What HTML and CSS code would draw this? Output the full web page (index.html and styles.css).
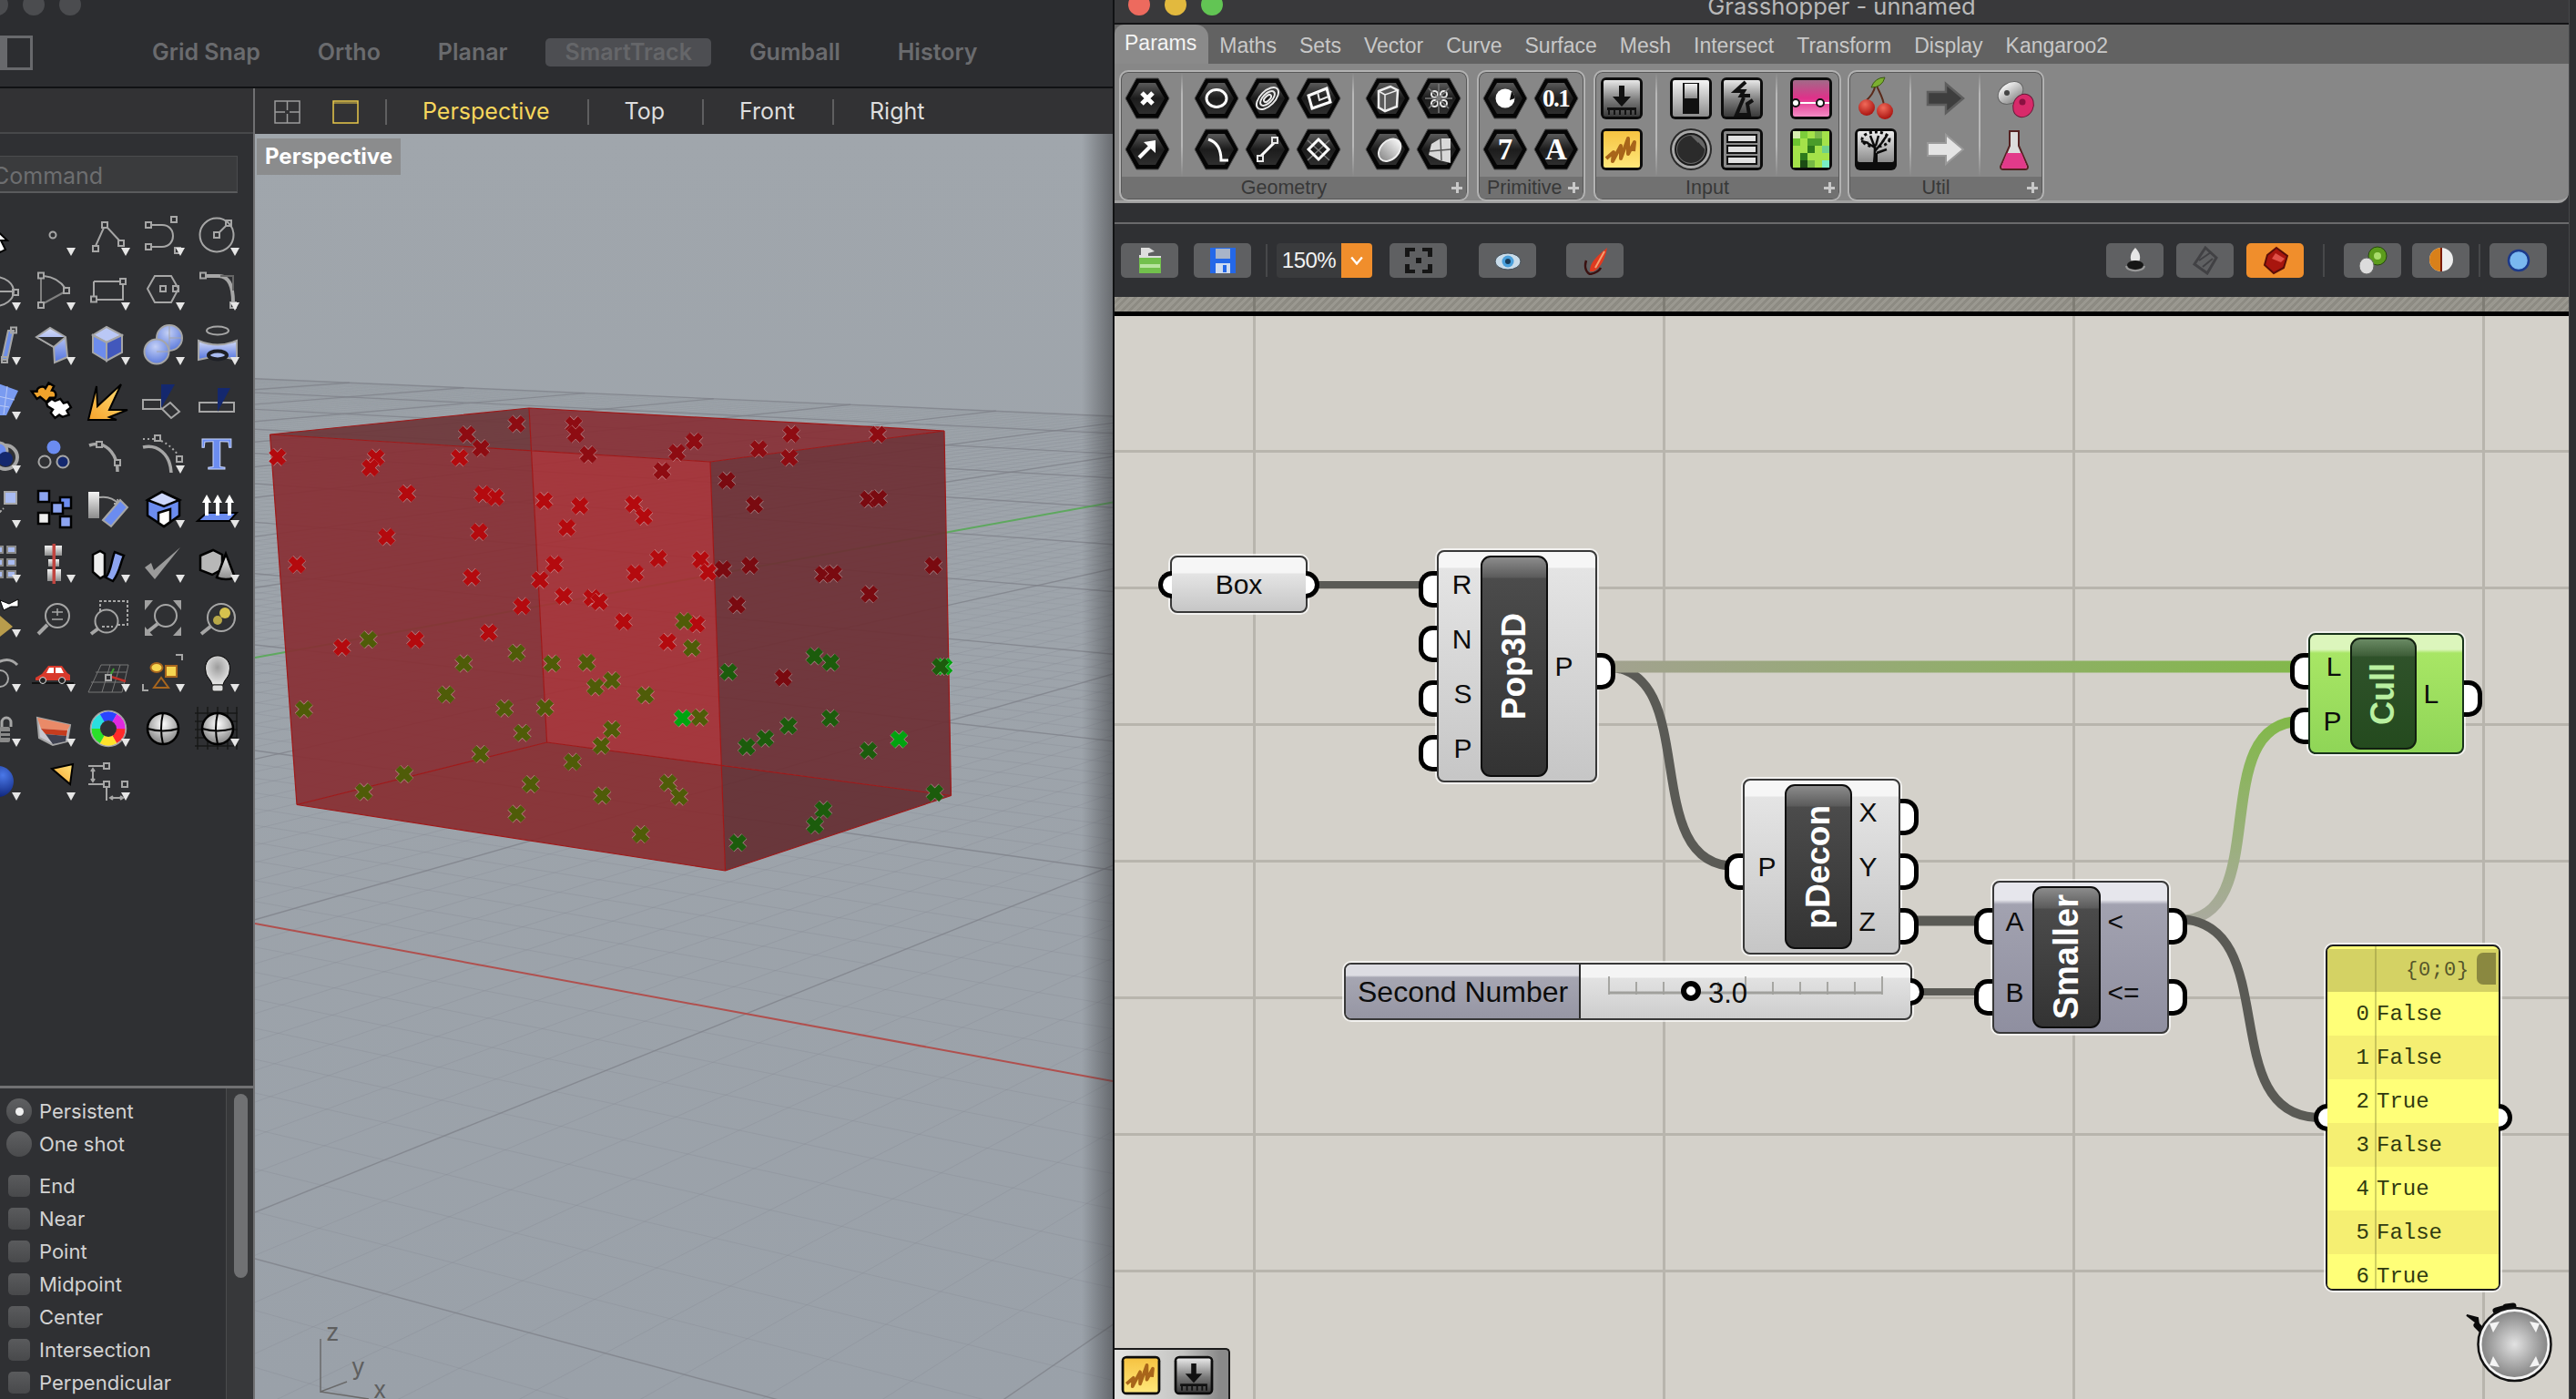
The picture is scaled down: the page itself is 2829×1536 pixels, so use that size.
FILE: index.html
```html
<!DOCTYPE html>
<html lang="en">
<head>
<meta charset="utf-8">
<title>Rhino and Grasshopper</title>
<link rel="stylesheet" href="styles.css">
</head>
<body>
<svg class="defs" width="0" height="0" aria-hidden="true">
  <defs>
    <linearGradient id="gHex" x1="0" y1="0" x2="0" y2="1"><stop offset="0" stop-color="#5a5a5a"/><stop offset=".5" stop-color="#1c1c1c"/><stop offset="1" stop-color="#2e2e2e"/></linearGradient>
    <linearGradient id="gBlue" x1="0" y1="0" x2="0" y2="1"><stop offset="0" stop-color="#d5dcf8"/><stop offset="1" stop-color="#5273de"/></linearGradient>
    <linearGradient id="gGrey" x1="0" y1="0" x2="0" y2="1"><stop offset="0" stop-color="#f4f4f4"/><stop offset="1" stop-color="#8c8c8c"/></linearGradient>
    <linearGradient id="gGreyD" x1="0" y1="0" x2="0" y2="1"><stop offset="0" stop-color="#e8e8e8"/><stop offset=".55" stop-color="#7a7a7a"/><stop offset="1" stop-color="#3a3a3a"/></linearGradient>
    <linearGradient id="gBoom" x1="0" y1="1" x2="1" y2="0"><stop offset="0" stop-color="#f6a22b"/><stop offset="1" stop-color="#ffe27a"/></linearGradient>
    <linearGradient id="gYel" x1="0" y1="0" x2="0" y2="1"><stop offset="0" stop-color="#f6c342"/><stop offset="1" stop-color="#ffe77a"/></linearGradient>
    <linearGradient id="gPink" x1="0" y1="0" x2="0" y2="1"><stop offset="0" stop-color="#a26a88"/><stop offset=".5" stop-color="#e0308a"/><stop offset="1" stop-color="#f48ac4"/></linearGradient>
    <linearGradient id="gTree" x1="0" y1="0" x2="0" y2="1"><stop offset="0" stop-color="#ededed"/><stop offset="1" stop-color="#8a8a8a"/></linearGradient>
    <linearGradient id="gWire1" gradientUnits="userSpaceOnUse" x1="1770" y1="0" x2="2530" y2="0"><stop offset="0" stop-color="#a2a28f"/><stop offset="1" stop-color="#82b84a"/></linearGradient>
    <linearGradient id="gWire2" gradientUnits="userSpaceOnUse" x1="0" y1="1012" x2="0" y2="793"><stop offset="0" stop-color="#aaaa9e"/><stop offset="1" stop-color="#82b84a"/></linearGradient>
    <radialGradient id="gBall" cx=".5" cy=".35" r=".7"><stop offset="0" stop-color="#fff"/><stop offset="1" stop-color="#777"/></radialGradient>
    <radialGradient id="gBlueBall" cx=".65" cy=".3" r=".8"><stop offset="0" stop-color="#4a78e8"/><stop offset="1" stop-color="#081c70"/></radialGradient>
    <radialGradient id="gSphere" cx=".45" cy=".3" r=".8"><stop offset="0" stop-color="#c4d0f6"/><stop offset="1" stop-color="#4f70d8"/></radialGradient>
    <radialGradient id="gBulb" cx=".5" cy=".4" r=".6"><stop offset="0" stop-color="#9c9c9c"/><stop offset="1" stop-color="#e8e8e8"/></radialGradient>
    <radialGradient id="gNav" cx=".5" cy=".5" r=".55"><stop offset="0" stop-color="#e2e2e2"/><stop offset="1" stop-color="#7e7e7e"/></radialGradient>
    <radialGradient id="gRed" cx=".4" cy=".3" r=".7"><stop offset="0" stop-color="#f06a5a"/><stop offset="1" stop-color="#aa1410"/></radialGradient>
    <path id="t" d="M45 43h10l-5 9z" fill="#e6e6e6" stroke="none"/>
    <rect id="s" x="-3" y="-3" width="6" height="6"/>
    <g id="xm" fill="none"><path d="M-7-7 7 7M7-7-7 7" stroke="#fff" stroke-opacity=".4" stroke-width="8.500"/><path d="M-7-7 7 7M7-7-7 7" stroke="currentColor" stroke-width="7.200"/></g>
    <g id="hex"><path d="M4 28 16 6H40L52 28 40 50H16Z" fill="#050505" stroke="#4a4a4a"/><path d="M9 28 19 11H37L47 28 37 45H19Z" fill="url(#gHex)"/></g>
    <symbol id="i-scribble" viewBox="0 0 56 56"><rect x="5" y="5" width="46" height="46" rx="6" fill="#0c0c0c"/><rect x="8" y="8" width="40" height="40" rx="2" fill="url(#gYel)"/><path d="M11 38 19 31 18 41 27 24 27 38 35 16 35 33 42 20 41 30" fill="none" stroke="#a8651a" stroke-width="4" stroke-linejoin="round"/></symbol>
    <symbol id="i-param" viewBox="0 0 56 56"><rect x="5" y="5" width="46" height="46" rx="6" fill="#0c0c0c"/><rect x="8" y="8" width="40" height="40" rx="2" fill="url(#gGreyD)"/><path d="M25 14h6v12h7L28 37 18 26h7z" fill="#111"/><path d="M12 38h32v3H12zM13 41h2v5h-2zM19 41h2v5h-2zM25 41h2v5h-2zM31 41h2v5h-2zM37 41h2v5h-2zM42 41h2v5h-2z" fill="#111"/></symbol>
  </defs>
</svg>

<div class="rhino">
  <header class="status">
    <div class="lights-grey"><i></i><i></i><i></i></div>
    <span class="status-box"></span>
    <span class="status-item status-first">Grid Snap</span>
    <span class="status-item">Ortho</span>
    <span class="status-item">Planar</span>
    <span class="status-item status-on">SmartTrack</span>
    <span class="status-item">Gumball</span>
    <span class="status-item">History</span>
  </header>
  <div class="rhino-body">
    <aside class="side">
      <div class="side-head"></div>
      <div class="command">Command</div>
      <div class="tools">
        <svg class="ic" viewBox="0 0 60 60"><path d="M22 18 40 35h-7l5 10-6 3-5-10-5 5z" fill="#fff" stroke="#000" stroke-width="2"/></svg>
        <svg class="ic" viewBox="0 0 60 60"><circle cx="30" cy="29" r="3.5"/><use href="#t"/></svg>
        <svg class="ic" viewBox="0 0 60 60"><path d="M17 41 26 21M30 21 43 35"/><use href="#s" x="27" y="18"/><use href="#s" x="17" y="44"/><use href="#s" x="45" y="38"/><use href="#t"/></svg>
        <svg class="ic" viewBox="0 0 60 60"><path d="M18 18H30C46 18 46 42 30 42H18"/><use href="#s" x="15" y="18"/><use href="#s" x="43" y="12"/><use href="#s" x="15" y="42"/><use href="#s" x="47" y="46"/><use href="#t"/></svg>
        <svg class="ic" viewBox="0 0 60 60"><circle cx="30" cy="29" r="18.5"/><path d="M33 26 41 18"/><use href="#s" x="30" y="29"/><use href="#s" x="43" y="16"/><use href="#t"/></svg>

        <svg class="ic" viewBox="0 0 60 60"><ellipse cx="27" cy="31" rx="20" ry="16"/><path d="M27 31H46"/><use href="#s" x="27" y="31"/><use href="#s" x="49" y="32"/><use href="#t"/></svg>
        <svg class="ic" viewBox="0 0 60 60"><path d="M20 14C32 15 40 22 44 28"/><path d="M17 17V43M20 44 42 32" stroke="#808080"/><use href="#s" x="17" y="13.5"/><use href="#s" x="17" y="46"/><use href="#s" x="45" y="30"/><use href="#t"/></svg>
        <svg class="ic" viewBox="0 0 60 60"><path d="M15 20H44M47 23V40H18M15 37V20"/><use href="#s" x="15" y="39.5"/><use href="#s" x="47" y="20"/><use href="#t"/></svg>
        <svg class="ic" viewBox="0 0 60 60"><path d="M14 28 22 14H40L48 28 40 43H22Z"/><use href="#s" x="31" y="28"/><use href="#s" x="45" y="28"/><use href="#t"/></svg>
        <svg class="ic" viewBox="0 0 60 60"><path d="M18 14H32Q48 14 48 43" stroke-width="4"/><path d="M34 14H48V30" stroke="#666"/><use href="#s" x="15" y="13.5"/><use href="#s" x="48" y="46"/><use href="#t"/></svg>

        <svg class="ic" viewBox="0 0 60 60"><path d="M34 46 41 14H47L40 46Z" fill="#6d8ee8"/><use href="#s" x="47" y="13.5"/><use href="#s" x="37" y="46"/><use href="#t"/></svg>
        <svg class="ic" viewBox="0 0 60 60"><path d="M12 21 27 11 44 21 46 43 32 49 31 32Z" fill="url(#gBlue)"/><path d="M12 21 31 32 44 21" fill="#2f3033"/><use href="#t"/></svg>
        <svg class="ic" viewBox="0 0 60 60"><path d="M29 10 46 19 29 27 14 19Z" fill="#bac8f6"/><path d="M14 19 29 27V47L14 38Z" fill="#6d8cec"/><path d="M46 19V38L29 47V27Z" fill="#4258bc"/><use href="#t"/></svg>
        <svg class="ic" viewBox="0 0 60 60"><circle cx="38" cy="22" r="14" fill="url(#gSphere)"/><circle cx="24" cy="37" r="13.5" fill="url(#gSphere)"/><path d="M24 37H38M38 22H52M38 8V36" stroke-width="1"/><use href="#t"/></svg>
        <svg class="ic" viewBox="0 0 60 60"><ellipse cx="31" cy="14" rx="12" ry="4.5"/><path d="M10 25Q31 34 52 25V46Q31 40 10 46Z" fill="url(#gBlue)"/><ellipse cx="31" cy="41" rx="10" ry="4.5" fill="#a9bcf2" stroke="#1e2026" stroke-width="4"/><use href="#t"/></svg>

        <svg class="ic" viewBox="0 0 60 60"><path d="M30 12 52 20 39 47H30Z" fill="#7a9bf0" stroke="none"/><path d="M30 26 48 30M30 36 42 38M40 15 36 46" stroke="#b7c8f6" stroke-width="1"/><use href="#t"/></svg>
        <svg class="ic" viewBox="0 0 60 60"><g transform="translate(-5 -5) scale(1.170)"><path d="M10 22h5c0-4 6-6 8-3l3-5 5 3-2 4c3 0 5 4 3 7h-5l-3 4-6-5-3 2z" fill="#f0a32c" stroke="#000" stroke-width="2"/><path d="M24 33l5-4 3 2 5-2 3 4 4-1 3 5-4 3 2 4-6 2-3-2-4 3-4-5 2-3-5-3z" fill="#fff" stroke="#000" stroke-width="2"/></g></svg>
        <svg class="ic" viewBox="0 0 60 60"><path d="M9 52 18 15 19 37 45 13 32 41 52 41 32 49 40 52Z" fill="url(#gBoom)" stroke="#000" stroke-width="2"/></svg>
        <svg class="ic" viewBox="0 0 60 60"><path d="M9 30H29V40H9ZM30 40 39 33 49 43 40 50Z"/><path d="M29 13H44L29 39Z" fill="#14286e" stroke="none"/></svg>
        <svg class="ic" viewBox="0 0 60 60"><rect x="11" y="33" width="38" height="10"/><path d="M31 17H45L31 43Z" fill="#14286e" stroke="none"/></svg>

        <svg class="ic" viewBox="0 0 60 60"><circle cx="38" cy="34" r="13" stroke-width="4"/><circle cx="31" cy="27" r="9" fill="#6b8cf0" stroke-width="3"/><circle cx="38" cy="36" r="8" fill="#14286e" stroke="none"/><use href="#t"/></svg>
        <svg class="ic" viewBox="0 0 60 60"><circle cx="31" cy="23" r="7.5" fill="#6b8cf0" stroke="none"/><circle cx="21" cy="39" r="6.5"/><circle cx="41" cy="39" r="6.5" fill="#14286e"/></svg>
        <svg class="ic" viewBox="0 0 60 60"><path d="M10 21C26 15 41 28 41 50" stroke-width="3.5"/><use href="#s" x="21" y="20" fill="#2f3033"/><use href="#s" x="41" y="40" fill="#2f3033"/></svg>
        <svg class="ic" viewBox="0 0 60 60"><path d="M9 23C25 19 39 31 40 51" stroke-width="3.5"/><path d="M9 14H22M29 16C38 20 44 27 48 32" stroke-dasharray="2 3"/><use href="#s" x="25" y="13"/><use href="#s" x="49" y="36"/><use href="#t"/></svg>
        <svg class="ic" viewBox="0 0 60 60"><text class="ic-t" x="30" y="47">T</text></svg>

        <svg class="ic" viewBox="0 0 60 60"><rect x="37" y="12" width="13" height="13" fill="#a9bbf2"/><path d="M28 38 36 30" stroke-dasharray="3 2"/><use href="#t"/></svg>
        <svg class="ic" viewBox="0 0 60 60" stroke="#000"><g class="ic-bk"><rect x="14" y="11" width="12" height="12" fill="#8ca4f0"/><rect x="38" y="18" width="12" height="12" fill="#6b8cf0"/><rect x="29" y="24" width="12" height="12" fill="#8ca4f0"/><rect x="14" y="35" width="12" height="12" fill="#eee"/><rect x="38" y="39" width="12" height="12" fill="#8ca4f0"/></g></svg>
        <svg class="ic" viewBox="0 0 60 60"><rect x="9" y="12" width="12" height="29" fill="url(#gGrey)" stroke="none"/><path d="M21 18Q34 16 42 25M42 25 37 25M42 25 41 20"/><path d="M25 43 44 21 52 29 34 50Z" fill="#6b8cf0"/></svg>
        <svg class="ic" viewBox="0 0 60 60"><g class="ic-bk"><path d="M14 21 30 12 49 21V38L32 50 14 38Z" fill="#6b8cf0"/><path d="M14 21 30 12 49 21 32 28Z" fill="#ccd6fa"/><path d="M26 35 39 31V45L32 50 26 46Z" fill="#fff"/></g><use href="#t"/></svg>
        <svg class="ic" viewBox="0 0 60 60"><path d="M9 44 19 35H52L44 44Z" fill="#6b8cf0" stroke="#000"/><path d="M17 38V24H14L19 15 24 24H21V38ZM29 38V24H26L31 15 36 24H33V38ZM42 38V24H39L44 15 49 24H46V38Z" fill="#fff" stroke="none"/><use href="#t"/></svg>

        <svg class="ic" viewBox="0 0 60 60"><g fill="#a9bbf0" stroke="#8a8a8a"><rect x="30" y="12" width="5" height="7"/><rect x="40" y="12" width="9" height="7"/><rect x="30" y="26" width="5" height="7"/><rect x="40" y="26" width="9" height="7"/><rect x="30" y="39" width="5" height="7"/><rect x="40" y="39" width="9" height="7"/></g><use href="#t"/></svg>
        <svg class="ic" viewBox="0 0 60 60"><g fill="url(#gGrey)" stroke="none"><rect x="21" y="11" width="19" height="11"/><rect x="25" y="26" width="12" height="8"/><rect x="24" y="37" width="15" height="13"/></g><rect x="29.5" y="9" width="3.5" height="44" fill="#c04540" stroke="none"/><use href="#t"/></svg>
        <svg class="ic" viewBox="0 0 60 60"><g class="ic-bk"><path d="M14 21 22 17 27 20V44L22 47 14 40Z" fill="#eee"/><path d="M28 46C34 40 34 28 38 18L48 22C44 30 44 40 36 50Z" fill="#8ca4f0"/></g><use href="#t"/></svg>
        <svg class="ic" viewBox="0 0 60 60"><path d="M11 35 18 30 21 38 50 13 22 48Z" fill="#9a9a9a" stroke="none"/><use href="#t"/></svg>
        <svg class="ic" viewBox="0 0 60 60"><g class="ic-bk"><path d="M12 22 26 16 36 21V37L25 43 12 38Z" fill="#b8b8b8"/><path d="M40 20 30 46Q40 50 50 46Z" fill="url(#gGrey)"/></g><use href="#t"/></svg>

        <svg class="ic" viewBox="0 0 60 60"><path d="M32 11 42 15 52 10V18H44L36 22Z" fill="#fff" stroke="#000" stroke-width="1"/><path d="M32 28 46 40 32 51Z" fill="#b99c4c" stroke="none"/><use href="#t"/></svg>
        <svg class="ic" viewBox="0 0 60 60"><circle cx="35" cy="28" r="13"/><path d="M24 38 14 48" stroke-width="4"/><path d="M29 24H41M35 20V28M29 32H41" stroke-width="1.5"/></svg>
        <svg class="ic" viewBox="0 0 60 60"><circle cx="29" cy="34" r="12.5"/><path d="M20 42 12 48" stroke-width="4"/><path d="M22 23V12H52V38H40M24 40H36" stroke-dasharray="3 2"/></svg>
        <svg class="ic" viewBox="0 0 60 60"><circle cx="34" cy="28" r="12"/><path d="M25 37 15 45" stroke-width="4"/><path d="M11 11H20L11 22ZM51 11H42L51 22ZM11 50H20L11 40ZM51 50H42L51 40Z" fill="#a0a0a0" stroke="none"/></svg>
        <svg class="ic" viewBox="0 0 60 60"><circle cx="35" cy="30" r="15"/><path d="M23 40 13 48" stroke-width="4"/><circle cx="39" cy="25" r="6" fill="#d6c24e" stroke="none"/><circle cx="31" cy="33" r="5" fill="#b8a848" stroke="none"/></svg>

        <svg class="ic" viewBox="0 0 60 60"><path d="M28 20Q42 12 51 22" stroke-width="3"/><circle cx="32" cy="37" r="9"/><use href="#t"/></svg>
        <svg class="ic" viewBox="0 0 60 60"><path d="M11 36 18 32 25 23H40L46 31 49 33V39H11Z" fill="#d83a2c" stroke="none"/><path d="M26 25H31V31H23ZM33 25H39L42 31H33Z" fill="#fff" stroke="none"/><path d="M7 42H53" stroke="#111" stroke-width="2"/><circle cx="19" cy="39" r="3.5" fill="#222" stroke="#ddd" stroke-width="1"/><circle cx="40" cy="39" r="3.5" fill="#222" stroke="#ddd" stroke-width="1"/><use href="#t"/></svg>
        <svg class="ic" viewBox="0 0 60 60"><path d="M23 22H53L46 52H9ZM17 30H51M12 41H48M33 22 24 52M44 22 35 52" stroke="#777" stroke-width="1"/><path d="M33 34 37 26" stroke="#3c9c30"/><path d="M34 35 50 40" stroke="#c03028" stroke-width="2.5"/><use href="#s" x="31" y="36" fill="#2f3033"/><use href="#t"/></svg>
        <svg class="ic" viewBox="0 0 60 60"><ellipse cx="24" cy="25" rx="6.5" ry="5" fill="#f6d550" stroke="#a8661e"/><rect x="34" y="23" width="12" height="12" fill="#f6d550" stroke="#a8661e"/><path d="M29 36 21 47H37Z" stroke="#a8661e"/><path d="M45 11H52V17M9 43V50H15"/><use href="#t"/></svg>
        <svg class="ic" viewBox="0 0 60 60"><path d="M18 29A13.5 13.5 0 1 1 44 29C44 35 38 38 37 44H25C24 38 18 35 18 29Z" fill="url(#gBulb)" stroke="#000" stroke-width="1"/><rect x="25" y="44" width="12" height="7" rx="2" fill="#ddd" stroke="#222" stroke-width="1"/><use href="#t"/></svg>

        <svg class="ic" viewBox="0 0 60 60"><path d="M34 30V25A5 5 0 0 1 44 25V30" stroke-width="3"/><rect x="31" y="30" width="12" height="17" rx="2" fill="#8a8a8a" stroke="none"/><path d="M33 36H43M33 41H43" stroke="#2f3033"/><use href="#t"/></svg>
        <svg class="ic" viewBox="0 0 60 60"><path d="M13 20 49 28 46 46 30 50 15 42Z" fill="#c8c8d0"/><path d="M13 20 49 28 46 34 17 32Z" fill="#ea8a68" stroke="none"/><path d="M17 32 46 34 45 40 22 38Z" fill="#c43c1e" stroke="none"/><path d="M22 38 45 40 44 46 30 49Z" fill="#3e4150" stroke="none"/><use href="#t"/></svg>
        <svg class="ic" viewBox="0 0 60 60"><circle cx="31" cy="32" r="19.5" stroke="#a0a0a0" stroke-width="1.5" fill="#cfcfcf"/><g class="wheel"><circle cx="31" cy="32" r="13.5" stroke="#ff2a2a"/><circle cx="31" cy="32" r="13.5" stroke="#ffe22a" class="w1"/><circle cx="31" cy="32" r="13.5" stroke="#2ae02a" class="w2"/><circle cx="31" cy="32" r="13.5" stroke="#2adfe0" class="w3"/><circle cx="31" cy="32" r="13.5" stroke="#2a44ff" class="w4"/><circle cx="31" cy="32" r="13.5" stroke="#e02adf" class="w5"/></g><circle cx="31" cy="32" r="9" fill="#2f3033" stroke="none"/><use href="#t"/></svg>
        <svg class="ic" viewBox="0 0 60 60"><ellipse cx="31" cy="32" rx="17" ry="17" fill="url(#gBall)" stroke="#000" stroke-width="2.5"/><path d="M14 32Q31 37 48 32M31 15Q27 32 31 49" stroke="#000"/></svg>
        <svg class="ic" viewBox="0 0 60 60"><path d="M6 15H53M6 24H53M6 33H53M6 42H53M6 51H53M9 8V55M20 8V55M31 8V55M42 8V55M52 8V55" stroke="#181818" stroke-width="1.5"/><ellipse cx="31" cy="32" rx="17" ry="17" fill="url(#gBall)" stroke="#000" stroke-width="2.5"/><path d="M14 32Q31 37 48 32M31 15Q27 32 31 49" stroke="#000"/><use href="#t"/></svg>

        <svg class="ic" viewBox="0 0 60 60"><circle cx="30" cy="31" r="17" fill="url(#gBlueBall)" stroke="none"/><use href="#t"/></svg>
        <svg class="ic" viewBox="0 0 60 60"><path d="M29 17 52 12 49 34Z" fill="url(#gBoom)" stroke="#000" stroke-width="2"/><use href="#t"/></svg>
        <svg class="ic" viewBox="0 0 60 60"><path d="M9 14H26M9 34H26M14 18V30M12 20 14 17 16 20M12 28 14 31 16 28M29 37V52M33 49H47M36 47 33 49 36 51M44 47 47 49 44 51"/><use href="#s" x="29" y="14"/><use href="#s" x="29" y="34"/><use href="#s" x="49" y="34"/><use href="#t"/></svg>
      </div>
      <div class="snap">
        <div class="snap-list">
          <label class="snap-row"><span class="radio radio-on"></span>Persistent</label>
          <label class="snap-row snap-row-gap"><span class="radio"></span>One shot</label>
          <label class="snap-row"><span class="check"></span>End</label>
          <label class="snap-row"><span class="check"></span>Near</label>
          <label class="snap-row"><span class="check"></span>Point</label>
          <label class="snap-row"><span class="check"></span>Midpoint</label>
          <label class="snap-row"><span class="check"></span>Center</label>
          <label class="snap-row"><span class="check"></span>Intersection</label>
          <label class="snap-row"><span class="check"></span>Perpendicular</label>
        </div>
        <div class="snap-scroll"><div class="snap-thumb"></div></div>
      </div>
    </aside>
    <section class="view">
      <nav class="vtabs">
        <svg class="vicon" viewBox="0 0 29 26"><path d="M1 1H28V25H1ZM14.500 1V11M14.500 15V25M1 13H12M17 13H28"/></svg>
        <svg class="vicon vicon-on" viewBox="0 0 29 26"><path d="M1 1H28V25H1Z"/><path d="M1 3H28" stroke-width="1"/></svg>
        <span class="vtab vtab-on">Perspective</span>
        <span class="vtab">Top</span>
        <span class="vtab">Front</span>
        <span class="vtab">Right</span>
      </nav>
      <div class="viewport">
        <svg id="scene" class="scene" viewBox="280 147 942 1389">
          <g id="grid"></g>
          <g class="box-faces">
            <polygon class="f-left" points="296.5,477 583.500,494.800 600.600,815 326,883.500"/>
            <polygon class="f-center" points="583.500,494.800 780,507 792,840 600.600,815"/>
            <polygon class="f-topl" points="296.500,477 581,448 583.500,494.800"/>
            <polygon class="f-topr" points="581,448 1037,473 780,507 583.500,494.800"/>
            <polygon class="f-right" points="780,507 1037,473 1044.500,873.500 792,840"/>
            <polygon class="f-botr" points="792,840 1044.500,873.500 796.500,956"/>
            <polygon class="f-bot" points="326,883.500 600.600,815 792,840 796.500,956"/>
          </g>
          <path class="box-edges" d="M296.500 477 780 507 1037 473 581 448ZM326 883.500 796.500 956 1044.500 873.500 600.600 815ZM296.500 477 326 883.500M780 507 796.500 956M1037 473 1044.500 873.500M581 448 600.600 815"/>
          <g id="marks"></g>
          <path class="axis-lines" d="M352 1470V1528L381 1517M352 1528 405 1536"/>
          <text class="axis-txt" x="358" y="1472">z</text>
          <text class="axis-txt" x="386" y="1510">y</text>
          <text class="axis-txt" x="410" y="1535">x</text>
        </svg>
        <div class="vp-label">Perspective</div>
        <div class="vp-shade"></div>
      </div>
    </section>
  </div>
</div>

<div class="gh">
  <div class="gh-main">
    <div class="gh-title"><div class="lights"><i class="l-r"></i><i class="l-y"></i><i class="l-g"></i></div><span>Grasshopper - unnamed</span></div>
    <div class="gh-tabs">
      <span class="gh-tab gh-tab-on">Params</span>
      <span class="gh-tab">Maths</span><span class="gh-tab">Sets</span><span class="gh-tab">Vector</span><span class="gh-tab">Curve</span><span class="gh-tab">Surface</span><span class="gh-tab">Mesh</span><span class="gh-tab">Intersect</span><span class="gh-tab">Transform</span><span class="gh-tab">Display</span><span class="gh-tab">Kangaroo2</span>
    </div>
    <div class="ribbon">
      <section class="rpanel rp-geo">
        <div class="ricons">
          <div class="rgroup">
            <svg class="ri" viewBox="0 0 56 56"><use href="#hex"/><path class="g5" d="M22 22 34 34M34 22 22 34"/></svg>
            <svg class="ri" viewBox="0 0 56 56"><use href="#hex"/><path class="g4" d="M19 37 31 25"/><path d="M37 18V32L24 20Z" fill="#fff"/></svg>
          </div>
          <i class="rsep"></i>
          <div class="rgroup">
            <svg class="ri" viewBox="0 0 56 56"><use href="#hex"/><ellipse class="g3" cx="28" cy="28" rx="11" ry="9.500"/></svg>
            <svg class="ri" viewBox="0 0 56 56"><use href="#hex"/><path class="g3" d="M19 17C29 20 33 29 33 40H41"/></svg>
            <svg class="ri" viewBox="0 0 56 56"><use href="#hex"/><g class="g2" transform="rotate(-45 28 28)"><ellipse cx="28" cy="28" rx="15" ry="8"/><ellipse cx="28" cy="28" rx="10" ry="5"/><ellipse cx="28" cy="28" rx="5" ry="2.500"/></g></svg>
            <svg class="ri" viewBox="0 0 56 56"><use href="#hex"/><path class="g3" d="M21 35 35 21"/><rect class="g2" x="17" y="35" width="6" height="6"/><rect class="g2" x="33" y="15" width="6" height="6"/></svg>
            <svg class="ri" viewBox="0 0 56 56"><use href="#hex"/><path class="g3" d="M17 25 37 17 41 32 21 39Z"/><path class="g2" d="M27 21 29 30 39 26"/></svg>
            <svg class="ri" viewBox="0 0 56 56"><use href="#hex"/><path class="gd" d="M16 18 40 40M40 18 16 40"/><path class="g3" d="M28 17 39 28 28 39 17 28Z"/></svg>
          </div>
          <i class="rsep"></i>
          <div class="rgroup">
            <svg class="ri" viewBox="0 0 56 56"><use href="#hex"/><path d="M18 20 31 15 39 19 38 37 25 42 18 38Z" fill="#5a5a5a" stroke="#eee" stroke-width="2.500"/><path d="M25 24 39 19M25 24 25 42M18 20 25 24" stroke="#eee" stroke-width="1.500"/></svg>
            <svg class="ri" viewBox="0 0 56 56"><use href="#hex"/><ellipse cx="30" cy="27" rx="10" ry="14" transform="rotate(45 28 28)" fill="url(#gGrey)" stroke="#eee" stroke-width="2"/></svg>
            <svg class="ri" viewBox="0 0 56 56"><use href="#hex"/><g class="g2"><rect x="20" y="20" width="7" height="7" rx="3.500"/><rect x="30" y="20" width="7" height="7" rx="3.500"/><rect x="20" y="30" width="7" height="7" rx="3.500"/><rect x="30" y="30" width="7" height="7" rx="3.500"/><path class="gd" d="M13 28H43M28 12V44M17 17 39 39M39 17 17 39"/></g></svg>
            <svg class="ri" viewBox="0 0 56 56"><use href="#hex"/><path d="M20 22 30 16H41V43L29 40 17 34Z" fill="#d8d8d8"/><path d="M30 16 31 40M18 30 41 28" stroke="#555" stroke-width="1.500"/></svg>
          </div>
        </div>
        <div class="rlabel">Geometry<i class="rplus"></i></div>
      </section>
      <section class="rpanel rp-prim">
        <div class="ricons">
          <div class="rgroup">
            <svg class="ri" viewBox="0 0 56 56"><use href="#hex"/><circle cx="28" cy="28" r="10.500" fill="#fff"/><path d="M35 20.500A10.500 10.500 0 0 1 38.500 28L33 30Z" fill="#111"/></svg>
            <svg class="ri" viewBox="0 0 56 56"><use href="#hex"/><text class="hex-t" x="28" y="39">7</text></svg>
            <svg class="ri" viewBox="0 0 56 56"><use href="#hex"/><text class="hex-t hex-t-s" x="27.500" y="37">0.1</text></svg>
            <svg class="ri" viewBox="0 0 56 56"><use href="#hex"/><text class="hex-t" x="28" y="39">A</text></svg>
          </div>
        </div>
        <div class="rlabel">Primitive<i class="rplus"></i></div>
      </section>
      <section class="rpanel rp-input">
        <div class="ricons">
          <div class="rgroup">
            <svg class="ri" viewBox="0 0 56 56"><use href="#i-param"/></svg>
            <svg class="ri" viewBox="0 0 56 56"><use href="#i-scribble"/></svg>
          </div>
          <i class="rsep"></i>
          <div class="rgroup">
            <svg class="ri" viewBox="0 0 56 56"><rect x="5" y="5" width="46" height="46" rx="6" fill="#0c0c0c"/><rect x="8" y="8" width="40" height="40" rx="2" fill="url(#gGrey)"/><rect x="19" y="11" width="18" height="34" fill="#111"/><rect x="21" y="12" width="14" height="16" fill="url(#gGrey)"/></svg>
            <svg class="ri" viewBox="0 0 56 56"><circle cx="28" cy="28" r="23" fill="#2a2a2a"/><circle cx="28" cy="28" r="21" fill="#a8a8a8"/><circle cx="28" cy="28" r="17" fill="#666" stroke="#1a1a1a" stroke-width="2"/><path d="M28 13A15 15 0 1 0 28 43 15 15 0 0 0 43 28Z" fill="#2b2b2b"/><path d="M43 28 36 20V36Z" fill="#2b2b2b"/></svg>
            <svg class="ri" viewBox="0 0 56 56"><rect x="5" y="5" width="46" height="46" rx="6" fill="#0c0c0c"/><rect x="8" y="8" width="40" height="40" rx="2" fill="url(#gGreyD)"/><path d="M32 10 21 20H30L27 25H37M30 27 22 46H36L34 34 40 30" fill="none" stroke="#111" stroke-width="4"/></svg>
            <svg class="ri" viewBox="0 0 56 56"><rect x="5" y="5" width="46" height="46" rx="6" fill="#0c0c0c"/><rect x="8" y="8" width="40" height="40" rx="2" fill="#8a8a8a"/><g fill="#e0e0e0" stroke="#111" stroke-width="2"><rect x="12" y="12" width="32" height="8"/><rect x="12" y="24" width="32" height="8"/><rect x="12" y="36" width="32" height="8"/></g></svg>
          </div>
          <i class="rsep"></i>
          <div class="rgroup">
            <svg class="ri" viewBox="0 0 56 56"><rect x="5" y="5" width="46" height="46" rx="6" fill="#0c0c0c"/><rect x="8" y="8" width="40" height="40" rx="2" fill="url(#gPink)"/><path d="M8 33H48" stroke="#fff" stroke-width="2"/><circle cx="11" cy="33" r="4" fill="#fff" stroke="#111" stroke-width="2"/><circle cx="38" cy="33" r="4" fill="#fff" stroke="#111" stroke-width="2"/></svg>
            <svg class="ri" viewBox="0 0 56 56"><rect x="5" y="5" width="46" height="46" rx="6" fill="#0c0c0c"/><g class="check-g"><rect x="8" y="8" width="40" height="40" fill="#a4e24a"/><rect x="8" y="8" width="8" height="8" fill="#d8f0b0"/><rect x="16" y="8" width="8" height="8" fill="#7ccc3a"/><rect x="32" y="8" width="8" height="8" fill="#7cb84a"/><rect x="8" y="16" width="8" height="8" fill="#6cc430"/><rect x="24" y="16" width="8" height="8" fill="#4a9c2a"/><rect x="32" y="16" width="8" height="8" fill="#4a9c2a"/><rect x="24" y="24" width="8" height="8" fill="#2e7a1c"/><rect x="16" y="32" width="8" height="8" fill="#2e7a1c"/><rect x="24" y="32" width="8" height="8" fill="#a4e24a"/><rect x="40" y="24" width="8" height="8" fill="#6fd08a"/><rect x="16" y="40" width="8" height="8" fill="#1c4c14"/><rect x="24" y="40" width="8" height="8" fill="#76b844"/><rect x="40" y="40" width="8" height="8" fill="#78f0c4"/></g></svg>
          </div>
        </div>
        <div class="rlabel">Input<i class="rplus"></i></div>
      </section>
      <section class="rpanel rp-util">
        <div class="ricons">
          <div class="rgroup">
            <svg class="ri" viewBox="0 0 56 56"><path d="M28 12C26 22 22 26 18 30M28 12C32 22 36 26 37 36" fill="none" stroke="#5a2a1a" stroke-width="2"/><path d="M23 16Q27 5 38 5 35 16 23 16Z" fill="#7cb030" stroke="#3a5a10"/><circle cx="18" cy="38" r="9" fill="url(#gRed)"/><circle cx="38" cy="42" r="9" fill="url(#gRed)"/></svg>
            <svg class="ri" viewBox="0 0 56 56"><rect x="5" y="5" width="46" height="46" rx="6" fill="#0c0c0c"/><rect x="8" y="8" width="40" height="34" rx="2" fill="url(#gTree)"/><path d="M26 44C27 36 27 30 27 26L17 20M27 30 37 18M27 26 22 13M29 32 40 28M20 21 12 19M35 20 40 13M28 24 31 13" fill="none" stroke="#0c0c0c" stroke-width="2.500"/><g class="tree-b"><ellipse cx="28" cy="17" rx="15" ry="8"/></g><rect x="26" y="32" width="4" height="12" fill="#0c0c0c"/></svg>
          </div>
          <i class="rsep"></i>
          <div class="rgroup">
            <svg class="ri" viewBox="0 0 56 56"><path d="M9 21H29V12L48 28 29 44V35H9Z" fill="#3e3e3e" stroke="#5e5e5e" stroke-width="2.500"/></svg>
            <svg class="ri" viewBox="0 0 56 56"><path d="M9 21H29V12L48 28 29 44V35H9Z" fill="#e4e4e4" stroke="#9a9a9a" stroke-width="2"/></svg>
          </div>
          <i class="rsep"></i>
          <div class="rgroup">
            <svg class="ri" viewBox="0 0 56 56"><ellipse cx="24" cy="22" rx="15" ry="11" transform="rotate(-35 24 22)" fill="url(#gGrey)" stroke="#666"/><circle cx="20" cy="22" r="3" fill="#444"/><ellipse cx="38" cy="36" rx="11" ry="13" transform="rotate(25 38 36)" fill="#d82a6a" stroke="#6a1838"/><circle cx="37" cy="32" r="3.500" fill="#8a1040"/></svg>
            <svg class="ri" viewBox="0 0 56 56"><path d="M23 8H33V24L43 47Q43 50 40 50H16Q13 50 13 47L23 24Z" fill="#dcdcdc" stroke="#522" stroke-width="2"/><path d="M20 32H36L42 47Q42 49 40 49H16Q14 49 14 47Z" fill="#e23a8a"/></svg>
          </div>
        </div>
        <div class="rlabel">Util<i class="rplus"></i></div>
      </section>
    </div>
    <div class="gh-rule"></div>
    <div class="gh-tools">
      <button class="tb"><svg viewBox="0 0 40 32"><path d="M10 2H19L25 6 18 8V11H32V30H8V10H10Z" fill="#dedede"/><path d="M8 13H32V30H8Z" fill="#72c04c"/><path d="M9 22H31" stroke="#b8e4a0" stroke-width="4"/></svg></button>
      <button class="tb tb-g17"><svg viewBox="0 0 40 32"><path d="M6 2H34V30H6Z" fill="#2468e8"/><rect x="12" y="3" width="16" height="11" fill="#a8b4c8"/><rect x="12" y="19" width="16" height="11" fill="#cfdcf0"/><rect x="20" y="21" width="4" height="8" fill="#2468e8"/></svg></button>
      <i class="tb-sep tb-sep-a"></i>
      <div class="zoom"><span class="zoom-v">150%</span><span class="zoom-a"><svg viewBox="0 0 12 8"><path d="M1 1 6 7 11 1"/></svg></span></div>
      <button class="tb tb-g19"><svg viewBox="0 0 40 32"><path d="M5 2H16V6H10V12H5ZM35 2H24V6H30V12H35ZM5 30H16V26H10V20H5ZM35 30H24V26H30V20H35ZM17 13H23V19H17Z" fill="#161616"/></svg></button>
      <button class="tb tb-g35"><svg viewBox="0 0 40 32"><ellipse cx="20" cy="17" rx="14" ry="9" fill="#c9dcea" stroke="#46525c"/><circle cx="20" cy="17" r="6.500" fill="#4aa0dc"/><circle cx="20" cy="17" r="3" fill="#173a58"/></svg></button>
      <button class="tb tb-g33"><svg viewBox="0 0 40 32"><path d="M14 28C14 20 18 14 33 2 31 14 26 24 18 28Z" fill="#e03a20"/><path d="M10 16C8 22 9 28 14 31 20 30 24 28 26 24" fill="none" stroke="#3a1010" stroke-width="2.500"/><path d="M20 24 30 6" stroke="#f4a070" stroke-width="2"/></svg></button>
      <button class="tb tb-auto"><svg viewBox="0 0 40 32"><path d="M20 2C14 8 14 14 16 17H24C26 14 26 8 20 2Z" fill="#e6e6e6"/><ellipse cx="20" cy="21" rx="9" ry="5" fill="#161616"/><path d="M10 22C11 29 29 29 30 22" fill="none" stroke="#999" stroke-width="2"/></svg></button>
      <button class="tb tb-g14"><svg viewBox="0 0 40 32"><path d="M20 2 32 13 22 30 8 20Z" fill="none" stroke="#414144" stroke-width="3"/><path d="M13 16 26 7M17 23 28 14" stroke="#414144" stroke-width="2"/></svg></button>
      <button class="tb tb-g14 tb-hot"><svg viewBox="0 0 40 32"><path d="M21 2 33 11 29 24 18 30 8 21 11 10Z" fill="#a8150e" stroke="#5a0d08" stroke-width="2"/><path d="M20 8 30 14 26 18 16 14Z" fill="#e05048"/></svg></button>
      <i class="tb-sep tb-sep-b"></i>
      <button class="tb tb-g21"><svg viewBox="0 0 40 32"><ellipse cx="25" cy="11" rx="10" ry="10" fill="#5c9c1c" stroke="#264a0c"/><circle cx="25" cy="11" r="4" fill="#a8dc6a"/><ellipse cx="13" cy="22" rx="8" ry="9" fill="#dcdcdc" stroke="#666"/></svg></button>
      <button class="tb tb-g12"><svg viewBox="0 0 40 32"><circle cx="20" cy="15" r="13" fill="#eee"/><path d="M20 2A13 13 0 0 0 20 28Z" fill="#d8801a"/><path d="M20 2V28" stroke="#7a1c0c" stroke-width="2"/></svg></button>
      <i class="tb-sep tb-sep-c"></i>
      <button class="tb tb-g12"><svg viewBox="0 0 40 32"><circle cx="20" cy="16" r="11" fill="#7ab8f0" stroke="#1c3a8c" stroke-width="2.500"/></svg></button>
    </div>
    <div class="gh-hatch"></div>
    <div class="gh-black"></div>
    <div class="canvas">
      <svg class="wires" viewBox="1224 348 1597 1188">
        <path class="w w-thin" d="M1445 643H1568"/>
        <path class="w w-med" d="M1762 733C1872 733 1796 952 1906 952"/>
        <path class="w w-green1" d="M1766 733H2530"/>
        <path class="w w-thick" d="M2098 1012H2178"/>
        <path class="w w-thin" d="M2108 1090H2178"/>
        <path class="w w-green2" d="M2392 1012C2500 1012 2420 793 2527 793"/>
        <path class="w w-med" d="M2392 1010C2510 1012 2430 1228 2548 1228"/>
      </svg>

      <div class="node node-box"><i class="grip grip-l"></i><span>Box</span><i class="grip grip-r"></i></div>

      <div class="node comp comp-pop">
        <div class="ins"><span class="port">R</span><span class="port">N</span><span class="port">S</span><span class="port">P</span></div>
        <div class="cap"><span>Pop3D</span></div>
        <div class="outs"><span class="port">P</span></div>
      </div>

      <div class="node comp comp-dec">
        <div class="ins"><span class="port">P</span></div>
        <div class="cap"><span>pDecon</span></div>
        <div class="outs"><span class="port">X</span><span class="port">Y</span><span class="port">Z</span></div>
      </div>

      <div class="node comp comp-small">
        <div class="ins"><span class="port">A</span><span class="port">B</span></div>
        <div class="cap"><span>Smaller</span></div>
        <div class="outs"><span class="port">&lt;</span><span class="port">&lt;=</span></div>
      </div>

      <div class="node comp comp-cull">
        <div class="ins"><span class="port">L</span><span class="port">P</span></div>
        <div class="cap"><span>Cull</span></div>
        <div class="outs"><span class="port">L</span></div>
      </div>

      <div class="node slider">
        <div class="sl-name">Second Number</div>
        <div class="sl-track">
          <svg viewBox="0 0 303 26"><path d="M1 4V24M31 10V24M61 10V24M91 10V24M121 10V24M151 4V24M181 10V24M211 10V24M241 10V24M271 10V24M301 4V24"/><path class="sl-rail" d="M1 22H301"/></svg>
          <i class="sl-knob"></i><span class="sl-val">3.0</span>
        </div>
        <i class="grip grip-r"></i>
      </div>

      <div class="node panel">
        <i class="grip grip-l"></i><i class="grip grip-r"></i>
        <div class="panel-in">
          <div class="p-head"><span>{0;0}</span><i></i></div>
          <div class="p-row"><b>0</b><span>False</span></div>
          <div class="p-row"><b>1</b><span>False</span></div>
          <div class="p-row"><b>2</b><span>True</span></div>
          <div class="p-row"><b>3</b><span>False</span></div>
          <div class="p-row"><b>4</b><span>True</span></div>
          <div class="p-row"><b>5</b><span>False</span></div>
          <div class="p-row"><b>6</b><span>True</span></div>
        </div>
      </div>

      <svg class="navi" viewBox="2700 1430 110 100">
        <path d="M2709 1445 2721 1448 2722 1455Z" fill="#0a0a0a" stroke="#0a0a0a" stroke-width="2"/>
        <path d="M2720 1456 2729 1465M2741 1440 2748 1438M2752 1436 2760 1435" fill="none" stroke="#0a0a0a" stroke-width="7" stroke-linecap="round"/>
        <circle cx="2761.500" cy="1477" r="40" fill="#f4f4f4" stroke="#111" stroke-width="2.500"/>
        <circle cx="2761.500" cy="1477" r="36" fill="url(#gNav)"/>
        <path d="M2734 1454 2745 1452 2738 1464ZM2789 1454 2778 1452 2785 1464ZM2734 1500 2745 1502 2738 1490ZM2789 1500 2778 1502 2785 1490Z" fill="#f4f4f4"/>
      </svg>

      <div class="minibar">
        <svg viewBox="0 0 56 56"><use href="#i-scribble"/></svg>
        <svg viewBox="0 0 56 56"><use href="#i-param"/></svg>
      </div>
    </div>
  </div>
  <div class="gh-strip"></div>
</div>
<script src="script.js"></script>
</body>
</html>
```

FILE: styles.css
```css
* { box-sizing: border-box; }
html, body { margin: 0; height: 100%; }
body {
  width: 2829px; height: 1536px; overflow: hidden;
  display: flex; background: #2c2d30;
  font-family: "Inter", "Liberation Sans", sans-serif;
}
.defs { position: absolute; }

/* ---------- Rhino window ---------- */
.rhino { width: 1222px; height: 100%; display: flex; flex-direction: column; background: #2c2d30; }
.status {
  position: relative; height: 97px; flex: none; padding-top: 20px;
  display: flex; align-items: center; gap: 21px;
  background: #2c2d30; border-bottom: 2px solid #111214;
  font-size: 25px; font-weight: 600; color: #6a6b6e;
}
.lights-grey { position: absolute; left: -15px; top: -7px; display: flex; gap: 16px; }
.lights-grey i { width: 24px; height: 24px; border-radius: 50%; background: #4b4c4f; }
.status-box { width: 36px; height: 38px; flex: none; border: 3px solid #68696c; border-left-width: 8px; }
.status-item { padding: 0 21px; line-height: 31px; height: 31px; border-radius: 5px; }
.status-first { margin-left: 89px; }
.status-on { background: #4d4e52; color: #656669; }
.rhino-body { flex: 1; display: flex; min-height: 0; }

.side { width: 280px; flex: none; display: flex; flex-direction: column; background: #2f3033; border-right: 2px solid #707072; overflow: hidden; }
.side-head { height: 50px; flex: none; background: #323234; border-bottom: 2px solid #47484a; }
.command {
  width: 261px; height: 41px; margin-top: 24px; flex: none;
  padding: 0; text-indent: -8px; overflow: hidden; line-height: 42px;
  background: #3a3b3d; border: 1px solid #4a4b4d; border-bottom: 2px solid #5a5b5d; border-left: 0;
  font-size: 25px; color: #6d6e70;
}
.tools {
  margin-top: 17px; margin-left: -32px; flex: none;
  display: grid; grid-template-columns: repeat(5, 60px); grid-auto-rows: 59.85px;
  width: 300px;
}
.ic { width: 60px; height: 60px; fill: none; stroke: #a6a6a6; stroke-width: 2; display: block; }
.ic-t { font: bold 50px "Liberation Serif", serif; fill: #6b8cf0; stroke: #c5d2fa; stroke-width: 1; text-anchor: middle; }
.ic-bk { stroke: #000; stroke-width: 2.5; }
.wheel { stroke-width: 10; stroke-dasharray: 14.14 70.7; fill: none; }
.w1 { transform: rotate(60deg); transform-origin: 31px 32px; }
.w2 { transform: rotate(120deg); transform-origin: 31px 32px; }
.w3 { transform: rotate(180deg); transform-origin: 31px 32px; }
.w4 { transform: rotate(240deg); transform-origin: 31px 32px; }
.w5 { transform: rotate(300deg); transform-origin: 31px 32px; }

.snap { margin-top: auto; height: 344px; flex: none; display: flex; border-top: 3px solid #717173; background: #2f3033; }
.snap-list { width: 248px; flex: none; padding-top: 7px; overflow: hidden; font-size: 22px; color: #d2d2d2; }
.snap-row { display: flex; align-items: center; gap: 8px; height: 36px; padding-left: 7px; line-height: 36px; white-space: nowrap; }
.snap-row-gap { margin-bottom: 10px; }
.radio { width: 28px; height: 28px; flex: none; border-radius: 50%; background: linear-gradient(#5f6062, #4a4b4d); display: flex; align-items: center; justify-content: center; }
.radio-on::after { content: ""; width: 9px; height: 9px; border-radius: 50%; background: #f0f0f0; }
.check { width: 24px; height: 24px; flex: none; margin: 0 2px; border-radius: 5px; background: linear-gradient(#5a5b5d, #48494b); }
.snap-scroll { width: 30px; flex: none; padding: 6px 6px 0 8px; background: #37383a; border-left: 1px solid #4a4b4d; }
.snap-thumb { height: 202px; border-radius: 8px; background: #707173; }

.view { flex: 1; min-width: 0; display: flex; flex-direction: column; }
.vtabs { height: 50px; flex: none; padding: 2px 0 0 21px; display: flex; align-items: center; background: #323234; }
.vicon { width: 29px; height: 26px; fill: none; stroke: #9c9c9c; stroke-width: 1.5; margin-right: 35px; flex: none; }
.vicon-on { stroke: #e8c84a; margin-right: 29px; }
.vtab { height: 28px; line-height: 26px; padding: 0 41px 0 39px; border-left: 2px solid #5f5f60; font-size: 25px; color: #dedede; }
.vtab-on { color: #f6d65c; }

.viewport { position: relative; flex: 1; min-height: 0; background: linear-gradient(#a0a6ac, #9aa1a9); overflow: hidden; }
.scene { display: block; width: 942px; height: 1389px; }
.gl { stroke: #848991; stroke-width: 1; stroke-opacity: .3; }
.gf { stroke-opacity: .16; }
.gm { stroke: #7e8088; stroke-width: 1.4; stroke-opacity: .75; }
.gr { stroke: #b0504e; stroke-width: 2; }
.gg { stroke: #5ea85e; stroke-width: 2; }
.box-faces polygon { fill-opacity: .92; }
.f-left { fill: #882f34; }
.f-center { fill: #a52f34; }
.f-topl { fill: #6e363a; }
.f-topr { fill: #883036; }
.f-right { fill: #6e2f34; }
.f-botr { fill: #652e32; }
.f-bot { fill: #882e31; }
.box-edges { fill: none; stroke: #a01818; stroke-width: 1.2; }
.mk-red { color: #b40a0e; }
.mk-top { color: #8e0c12; }
.mk-dark { color: #7a0a10; }
.mk-olive { color: #4f5c08; }
.mk-green { color: #1c5c0c; }
.mk-lime { color: #00a410; }
.axis-lines { fill: none; stroke: #6a6a6a; stroke-width: 1.5; }
.axis-txt { font: 26px "Inter", sans-serif; fill: #5f5f5f; }
.vp-label { position: absolute; left: 2px; top: 5px; height: 40px; padding: 0 9px; line-height: 39px; background: #8b8c8d; color: #fff; font-size: 24px; font-weight: 700; }
.vp-shade { position: absolute; top: 0; right: 0; bottom: 0; width: 34px; background: linear-gradient(90deg, rgba(50,50,52,0), rgba(50,50,52,.5)); }

/* ---------- Grasshopper window ---------- */
.gh { flex: 1; display: flex; min-width: 0; border-left: 2px solid #111214; background: #2f3033; font-family: "Liberation Sans", Arial, sans-serif; }
.gh-main { width: 1597px; flex: none; display: flex; flex-direction: column; }
.gh-strip { flex: 1; background: #2d2e30; border-left: 1px solid #47484a; }
.gh-title { position: relative; height: 27px; flex: none; overflow: hidden; padding-bottom: 13px; display: flex; align-items: center; justify-content: center; background: #39393b; border-bottom: 2px solid #141416; font-family: "Inter", sans-serif; font-size: 25.5px; color: #b9b9b9; }
.lights { position: absolute; left: 15px; top: -7px; display: flex; gap: 16px; }
.lights i { width: 24px; height: 24px; border-radius: 50%; }
.l-r { background: #ed6a5e; }
.l-y { background: #e2b93e; }
.l-g { background: #62c554; }

.gh-tabs { height: 43px; flex: none; display: flex; align-items: center; gap: 25px; padding-right: 10px; background: #626262; font-size: 23px; color: #c8c8c8; }
.gh-tab { position: relative; top: 2px; }
.gh-tab-on { top: 0; height: 43px; margin-right: -13px; padding: 7px 13px 0 11px; line-height: 26px; align-self: flex-end; background: #8a8a8a; border-radius: 10px 14px 0 0; color: #f4f4f4; }

.ribbon { height: 153px; flex: none; display: flex; padding: 7px 0 0 5px; background: #878787; border-bottom: 3px solid #a0a0a0; border-bottom-right-radius: 12px; }
.rpanel { height: 144px; margin-right: 9px; display: flex; flex-direction: column; flex: none; border: 2px solid #b2b2b2; border-radius: 10px; box-shadow: inset 0 0 0 1px #585858; overflow: hidden; }
.rp-geo { width: 384px; } .rp-prim { width: 119px; } .rp-input { width: 272px; margin-right: 7px; } .rp-util { width: 216px; }
.ricons { height: 115px; flex: none; display: flex; padding: 1px 0 0 1px; }
.rgroup { display: grid; grid-template-rows: 56px 56px; grid-auto-flow: column; grid-auto-columns: 56px; }
.ri { width: 56px; height: 56px; display: block; }
.rsep { width: 2px; margin: 0 9px; background: linear-gradient(rgba(200,200,200,0), #b8b8b8 20%, #b8b8b8 70%, rgba(200,200,200,0)); }
.rlabel { position: relative; height: 24px; margin: 0 1px; padding-right: 22px; background: #717171; text-align: center; font-size: 21.5px; line-height: 24px; color: #383838; }
.rp-prim .rlabel { padding: 0 0 0 8px; text-align: left; }
.rplus { position: absolute; right: 4px; top: 6px; width: 12px; height: 12px; background: linear-gradient(#c8c8c8, #c8c8c8) center/12px 3px no-repeat, linear-gradient(#c8c8c8, #c8c8c8) center/3px 12px no-repeat; }
.g5, .g4, .g3, .g2, .gd { fill: none; stroke: #fff; }
.g5 { stroke-width: 5; } .g4 { stroke-width: 4; } .g3 { stroke-width: 3; } .g2 { fill: none; stroke: #e8e8e8; stroke-width: 2; }
.gd { stroke: #7a7a7a; stroke-width: 1.5; }
.hex-t { font: bold 33px "Liberation Serif", serif; fill: #fff; text-anchor: middle; }
.hex-t-s { font-size: 27px; letter-spacing: -1.5px; }
.tree-b { fill: none; stroke: #0c0c0c; stroke-width: 3; stroke-dasharray: 3 3; }

.gh-rule { height: 23px; flex: none; border-bottom: 2px solid #6a6a6c; background: #2f3033; }
.gh-tools { height: 80px; flex: none; display: flex; align-items: center; padding: 0 24px 0 7px; background: #2f3033; }
.tb { width: 63px; height: 38px; padding: 3px 0; flex: none; border: 0; border-radius: 5px; background: #5f6062; display: flex; align-items: center; justify-content: center; }
.tb svg { width: 40px; height: 32px; display: block; }
.tb-g14 { margin-left: 14px; } .tb-g17 { margin-left: 17px; } .tb-g19 { margin-left: 19px; } .tb-g33 { margin-left: 33px; } .tb-g35 { margin-left: 35px; }
.tb-g21 { margin-left: 21px; } .tb-g12 { margin-left: 12px; }
.tb-auto { margin-left: auto; }
.tb-hot { background: #f08e2c; }
.tb-sep { width: 2px; height: 36px; flex: none; background: #47484a; }
.tb-sep-a { margin: 0 10px 0 16px; }
.tb-sep-b { margin-left: 21px; }
.tb-sep-c { margin-left: 10px; }
.tb-sep-c + .tb { margin-left: 10px; }
.zoom { width: 105px; height: 38px; flex: none; display: flex; border-radius: 4px; overflow: hidden; background: #3a3b3d; }
.zoom-v { width: 71px; text-align: center; line-height: 38px; color: #f2f2f2; font-size: 24px; letter-spacing: -.5px; }
.zoom-a { flex: 1; background: #f08e2c; display: flex; align-items: center; justify-content: center; }
.zoom-a svg { width: 14px; height: 10px; fill: none; stroke: #fff; stroke-width: 2; }
.gh-hatch { height: 16px; flex: none; background-color: #928f87;
  background-image: linear-gradient(90deg, #7f7d75 3px, transparent 3px), repeating-linear-gradient(135deg, #9a9890 0 3px, #8d8b83 3px 6px);
  background-size: 450px 100%, auto; background-position: 152px 0, 0 0; }
.gh-black { height: 5px; flex: none; background: #000; }

/* ---------- Canvas ---------- */
.canvas {
  position: relative; flex: 1; min-height: 0; overflow: hidden;
  background-color: #d4d1ca;
  background-image: linear-gradient(90deg, #b8b5ad 3px, transparent 3px), linear-gradient(#b8b5ad 3px, transparent 3px);
  background-size: 450px 100%, 100% 150px;
  background-position: 152px 0, 0 147px;
}
.wires { position: absolute; left: 0; top: 0; width: 1597px; height: 1188px; }
.w { fill: none; stroke: #5a5a55; }
.w-thin { stroke-width: 8; }
.w-med { stroke-width: 10; }
.w-thick { stroke-width: 11; }
.w-green1 { stroke: url(#gWire1); stroke-width: 13; }
.w-green2 { stroke: url(#gWire2); stroke-width: 12; }

.node {
  position: absolute; border: 2.5px solid #383838; border-radius: 8px;
  box-shadow: 0 0 0 2px rgba(255,255,255,.7);
  background: linear-gradient(#f6f6f6 0 17px, #e4e4e4 18px, #c6c6c6 100%);
  font-size: 30px; color: #0c0c0c;
}
.grip { position: absolute; top: 50%; width: 15px; height: 30px; margin-top: -15px; border: 5.5px solid #000; background: #fff; }
.grip-r { left: 100%; margin-left: 0; border-left: 0; border-radius: 0 15px 15px 0; }
.grip-l { right: 100%; margin-right: 0; border-right: 0; border-radius: 15px 0 0 15px; }
.node-box { left: 61px; top: 263px; width: 151px; height: 63px; display: flex; align-items: center; justify-content: center; }

.comp { display: flex; }
.ins, .outs { display: flex; flex-direction: column; justify-content: center; }
.ins { width: calc(var(--lw) - 2.5px); flex: none; text-align: right; padding-right: 9px; }
.outs { flex: 1; text-align: left; padding-left: 8px; }
.port { position: relative; height: var(--pitch); line-height: var(--pitch); display: block; }
.port::before { content: ""; position: absolute; top: 50%; width: 15px; height: 30px; margin-top: -15px; border: 5.5px solid #000; background: #fff; }
.ins .port::before { right: 100%; margin-right: 2px; border-right: 0; border-radius: 15px 0 0 15px; }
.ins .port { width: calc(var(--lw) - 11.5px); }
.outs .port::before { left: 100%; margin-left: 2px; border-left: 0; border-radius: 0 15px 15px 0; }

.cap {
  width: var(--capw); flex: none; margin: 4px 0; position: relative;
  border: 2.5px solid #0d0d0d; border-radius: 11px;
  background: linear-gradient(#8c8c8c 0, #5b5b5b 22px, #4b4b4b 23px, #333 100%);
  display: flex; align-items: center; justify-content: center; overflow: hidden;
  color: #fff; font-weight: 700; font-size: 37px;
}
.cap span { writing-mode: vertical-rl; transform: rotate(180deg); white-space: nowrap; line-height: 1; }

.comp-pop { left: 354px; top: 257px; width: 176px; height: 255px; --pitch: 60px; --capw: 74px; --lw: 48px; }
.comp-dec { left: 690px; top: 508px; width: 173px; height: 193px; --pitch: 60px; --capw: 74px; --lw: 46px; }
.comp-small {
  left: 964px; top: 620px; width: 194px; height: 168px; --pitch: 78px; --capw: 75px; --lw: 44px;
  background: linear-gradient(#e6e6ec 0 19px, #a2a2b0 24px, #8f8fa0 100%);
}
.comp-small .cap { font-size: 38px; }
.comp-cull {
  left: 1311px; top: 348px; width: 171px; height: 133px; --pitch: 60px; --capw: 73px; --lw: 46px;
  background: linear-gradient(#dcf6bc 0 16px, #a8e665 20px, #8fd557 100%); border-color: #17331a;
}
.comp-cull .cap {
  border-color: #111f10; color: #b9f0a0;
  background: linear-gradient(#6a8a64 0, #3e5e38 18px, #2f522a 19px, #244a1e 100%);
  font-size: 36px; margin: 3px 0;
}

.slider { left: 252px; top: 710px; width: 624px; height: 63px; display: flex; background: linear-gradient(#f4f4f4 0 14px, #e2e2e2 15px, #cdcdcd 100%); }
.sl-name {
  width: 258px; flex: none; padding-left: 13px; line-height: 60px; white-space: nowrap; font-size: 32px;
  background: linear-gradient(#dcdce2 0 12px, #a6a6b2 14px, #9696a4 100%);
  border-right: 2.5px solid #2c2c2c; border-radius: 6px 0 0 6px;
}
.sl-track { position: relative; flex: 1; }
.sl-track svg { position: absolute; left: 30px; top: 9px; width: 303px; height: 26px; fill: none; stroke: #a6a6a2; stroke-width: 2; }
.sl-rail { stroke: #a0a09c; stroke-width: 3; }
.sl-knob { position: absolute; left: 110px; top: 18px; width: 22px; height: 22px; border: 6px solid #000; border-radius: 50%; background: #fff; }
.sl-val { position: absolute; left: 140px; top: 10px; line-height: 44px; font-size: 31px; }

.panel { left: 1330px; top: 690px; width: 192px; height: 380px; border-color: #1e1e1e; background: #ffff78; }
.panel-in { position: relative; height: 100%; overflow: hidden; padding-top: 3px; font-family: "Liberation Mono", "Courier New", monospace; font-size: 24px; color: #2f3a10; border-radius: 5px; }
.panel-in::after { content: ""; position: absolute; left: 52px; top: 0; bottom: 0; width: 2px; background: rgba(120,120,50,.35); }
.p-head { position: relative; height: 47px; display: flex; align-items: center; justify-content: flex-end; padding-right: 32px; background: #d4d264; font-size: 22px; letter-spacing: .8px; color: #55552a; }
.p-head i { position: absolute; right: 3px; top: 4px; width: 21px; height: 35px; border-radius: 7px 0 0 7px; background: #8a8840; }
.p-row { height: 48px; display: flex; align-items: center; }
.p-row:nth-child(odd) { background: #f5ef72; }
.p-row:nth-child(even) { background: #ffff78; }
.p-row b { width: 46px; text-align: right; font-weight: 400; }
.p-row span { margin-left: 8px; }

.navi { position: absolute; left: 1476px; top: 1082px; width: 110px; height: 100px; }
.minibar {
  position: absolute; left: 0; bottom: 0; width: 127px; height: 56px; padding: 2px 0 0 1px;
  display: flex; gap: 2px; border: 2.5px solid #1a1a1a; border-left: 0; border-bottom: 0; border-top-right-radius: 5px;
  background: linear-gradient(90deg, #e2e2e0 0 6%, #c4c4c2 60%, #8a8a8a 92%);
}
.minibar svg { width: 56px; height: 52px; display: block; }
```

FILE: script.js
```js
(function () {
  var NS = 'http://www.w3.org/2000/svg';
  var grid = document.getElementById('grid');
  var marks = document.getElementById('marks');

  function line(x1, y1, x2, y2, cls) {
    var l = document.createElementNS(NS, 'line');
    l.setAttribute('x1', x1.toFixed(1));
    l.setAttribute('y1', y1.toFixed(1));
    l.setAttribute('x2', x2.toFixed(1));
    l.setAttribute('y2', y2.toFixed(1));
    l.setAttribute('class', cls);
    grid.appendChild(l);
  }

  /* two-point perspective of the construction plane */
  var HORIZON = 228, ROW = 1536, VP1 = -4000, VP2 = 3009;
  function aSlope(k) { return (ROW - HORIZON) / (3122 + 227.1 * k - VP1); }
  function bSlope(j) { return (ROW - HORIZON) / (VP2 - (-4217 + 133 * j)); }

  var far = aSlope(100);
  function drawA(k, cls) {
    var m = aSlope(k);
    line(280, HORIZON + m * (280 - VP1), 1222, HORIZON + m * (1222 - VP1), cls);
  }
  function drawB(j, cls) {
    var m = bSlope(j);
    var x = (m * VP2 + far * VP1) / (far + m);
    line(x, HORIZON + m * (VP2 - x), 280, HORIZON + m * (VP2 - 280), cls);
  }
  var k, j;
  for (k = -14; k <= 100; k++) { if (k % 10) drawA(k, k > 30 ? 'gl gf' : 'gl'); }
  for (j = -100; j <= 41; j++) { if (j % 10) drawB(j, j < -20 ? 'gl gf' : 'gl'); }
  for (k = -10; k <= 100; k += 10) { if (k) drawA(k, 'gm'); }
  for (j = -100; j <= 40; j += 10) { if (j) drawB(j, 'gm'); }
  drawA(0, 'gr');
  drawB(0, 'gg');

  /* points, in a 1.96 x 2.703 scale relative to (270, 400) */
  var points = {
    'mk-red': [[68,275],[280,277],[268,307],[460,277],[347,383],[537,395],[510,385],[303,512],[502,497],[110,595],[486,632],[207,840],[365,818],[523,796],[594,718],[642,405],[719,420],[691,485],[835,415],[857,452],[664,593],[633,640],[684,688],[745,693],[761,705],[838,620],[888,576],[979,580],[995,617],[813,764],[970,771],[908,824]],
    'mk-top': [[583,177],[476,208],[506,249],[706,180],[710,207],[737,268],[928,262],[965,228],[896,316],[1104,251],[1174,207],[1170,277],[1360,208]],
    'mk-dark': [[1035,345],[1095,417],[1340,400],[1362,398],[1027,608],[1085,597],[1243,623],[1265,621],[1480,597],[1342,682],[1057,714],[1157,930]],
    'mk-olive': [[264,817],[125,1024],[469,888],[583,856],[431,980],[557,1021],[644,1019],[595,1094],[505,1157],[341,1216],[254,1269],[659,888],[734,885],[943,762],[960,842],[788,938],[752,958],[860,982],[788,1083],[765,1132],[703,1180],[977,1048],[613,1246],[767,1280],[583,1334],[909,1242],[933,1283],[850,1395]],
    'mk-lime': [[940,1050],[1406,1113],[1503,897]],
    'mk-green': [[1039,913],[1224,866],[1259,885],[1495,897],[1168,1073],[1258,1050],[1118,1110],[1078,1135],[1340,1146],[1483,1272],[1243,1322],[1225,1368],[1059,1420]]
  };
  Object.keys(points).forEach(function (cls) {
    points[cls].forEach(function (p) {
      var u = document.createElementNS(NS, 'use');
      u.setAttribute('href', '#xm');
      u.setAttribute('x', (270 + p[0] / 1.96).toFixed(1));
      u.setAttribute('y', (400 + p[1] / 2.703).toFixed(1));
      u.setAttribute('class', cls);
      marks.appendChild(u);
    });
  });
})();
```
